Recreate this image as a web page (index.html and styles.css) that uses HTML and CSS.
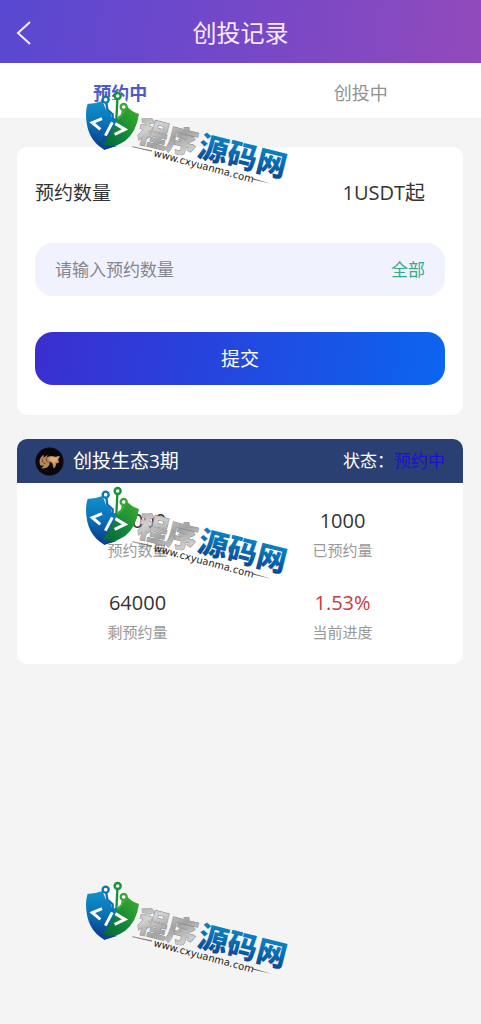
FILE: index.html
```html
<!DOCTYPE html>
<html lang="zh-CN">
<head>
<meta charset="utf-8">
<meta name="viewport" content="width=device-width, initial-scale=1">
<title>创投记录</title>
<link rel="stylesheet" href="styles.css">
</head>
<body>
<header class="topbar">
  <button class="back" type="button" aria-label="返回">
    <svg width="16" height="26" viewBox="0 0 16 26"><path d="M14 2 2 13l12 11" fill="none" stroke="currentColor" stroke-width="2"/></svg>
  </button>
  <h1 class="title">创投记录</h1>
</header>
<nav class="tabs">
  <a class="tab tab-active" href="#booking">预约中</a>
  <a class="tab" href="#investing">创投中</a>
</nav>
<main class="content">
  <form class="card form">
    <div class="form-row">
      <label for="amount">预约数量</label>
      <span class="minimum">1USDT起</span>
    </div>
    <div class="field">
      <input class="field-input" id="amount" type="text" placeholder="请输入预约数量">
      <button class="field-all" type="button">全部</button>
    </div>
    <button class="submit" type="button">提交</button>
  </form>
  <section class="card project">
    <div class="project-head">
      <svg class="avatar" viewBox="0 0 30 30">
        <circle cx="15" cy="15" r="14.500" fill="#08070c"/>
        <path d="M5 17C4 13 6 10 9 8l0 3 4-3-1 3c3-2 6-2 9-1l5-1-2 4 1 3-3 1-1 4-2 1-1-5-3-2c1 4-2 8-9 7 2-1 3-2 3-3-2 1-4 0-4-2z" fill="#b88758"/>
        <path d="M14 12c2-2 5-2 7-1l4-1-2 3 0 2-3 1 0 4-2-5-3-1z" fill="#e0ad79"/>
        <path d="M8 12c-1 3 0 5 3 5m1-6c-1 2 0 4 2 5" fill="none" stroke="#67432b"/>
      </svg>
      <h2 class="project-name">创投生态3期</h2>
      <span class="status">状态：<span class="status-value">预约中</span></span>
    </div>
    <dl class="stats">
      <div class="stat"><dd>65000</dd><dt>预约数量</dt></div>
      <div class="stat"><dd>1000</dd><dt>已预约量</dt></div>
      <div class="stat"><dd>64000</dd><dt>剩预约量</dt></div>
      <div class="stat"><dd class="progress">1.53%</dd><dt>当前进度</dt></div>
    </dl>
  </section>
</main>
<div class="marks" aria-hidden="true">
  <svg class="mark" viewBox="0 0 220 110">
    <defs>
      <linearGradient id="blue" x1="0" y1="0" x2="0" y2="1"><stop offset="0" stop-color="#1090cc"/><stop offset=".45" stop-color="#0a73b8"/><stop offset="1" stop-color="#0b3a86"/></linearGradient>
      <linearGradient id="green" x1="1" y1="0" x2="0" y2="1"><stop offset="0" stop-color="#43b02c"/><stop offset=".55" stop-color="#12853a"/><stop offset="1" stop-color="#03603b"/></linearGradient>
      <linearGradient id="silver" x1="0" y1="0" x2="1" y2="1"><stop offset="0" stop-color="#989898"/><stop offset=".3" stop-color="#d2d2d2"/><stop offset=".55" stop-color="#a2a2a2"/><stop offset=".8" stop-color="#cecece"/><stop offset="1" stop-color="#8d8d8d"/></linearGradient>
      <g id="logo">
        <svg width="220" height="110" viewBox="0 0 660 330">
          <path d="M23 56Q46 57 64 49L112 62 112 110 73 194Q18 164 18 88Q18 70 23 56Z" fill="url(#blue)"/>
          <path d="M110 62L140 63Q152 79 177 87Q170 140 135 168Q110 184 73 194L66 178Q92 150 110 108Z" fill="url(#green)"/>
          <path d="M66 178Q42 163 28 130Q40 167 73 194L113 182Q88 186 66 178Z" fill="#123f9a"/>
          <path d="M66 44L138 44 140 64 130 84 116 94 112 100 96 100 92 86 78 74Z" fill="#fff"/>
          <g fill="none" stroke-width="7"><path d="M79 54l3 20 16 14v20" stroke="#0874b8"/><path d="M112 44l-3 60" stroke="#16923a"/><path d="M129 76l-3 14-12 13" stroke="#39a935"/></g>
          <g fill="#fff" stroke-width="7"><circle cx="77" cy="44" r="9" stroke="#0874b8"/><circle cx="113" cy="33" r="9" stroke="#16923a"/><circle cx="131" cy="66" r="9" stroke="#39a935"/></g>
          <g fill="none" stroke="#fff" stroke-width="9"><path d="M66 101L37 113l24 20M97 112l-21 40M106 116l29 17-31 15"/></g>
          <path d="M157 185l58 12v2z" fill="#444" stroke="#444"/>
          <path d="M517 280l57 16-57-13z" fill="#444"/>
        </svg>
        <g transform="translate(56 56) rotate(14)">
          <text class="mark-name mark-silver" x="0" y="0" fill="url(#silver)">程序</text>
          <text class="mark-name" x="62" y="0" fill="url(#blue)">源码网</text>
        </g>
        <text class="mark-url" transform="translate(73 71) rotate(15)">www.cxyuanma.com</text>
      </g>
    </defs>
    <use href="#logo"/>
  </svg>
  <svg class="mark" viewBox="0 0 220 110"><use href="#logo"/></svg>
  <svg class="mark" viewBox="0 0 220 110"><use href="#logo"/></svg>
</div>
</body>
</html>
```

FILE: styles.css
```css
* { box-sizing: border-box; }

body {
  margin: 0;
  position: relative;
  min-height: 100vh;
  background: #f4f4f4;
  color: #333;
  font-family: "Open Sans", "Noto Sans CJK SC", sans-serif;
  font-size: 19px;
  line-height: 28px;
}

button, input { font: inherit; border: 0; padding: 0; background: none; }
h1, h2, dl, dd { margin: 0; font-weight: 400; }
a { text-decoration: none; }

.topbar {
  display: grid;
  grid-template-columns: 48px 1fr 48px;
  align-items: center;
  height: 63px;
  padding-top: 3px;
  background: linear-gradient(100deg, #5848d2, #7548c8 50%, #924abb);
  color: #fbeaff;
}
.back { display: flex; padding-left: 16px; color: inherit; }
.title { font-size: 24px; line-height: 34px; text-align: center; }

.tabs {
  display: grid;
  grid-template-columns: 1fr 1fr;
  align-items: center;
  height: 55px;
  padding-top: 4px;
  background: #fff;
  font-size: 18px;
  text-align: center;
}
.tab { color: #929292; }
.tab-active { color: #4e5acb; font-weight: 700; }

.content {
  display: flex;
  flex-direction: column;
  gap: 24px;
  padding: 29px 18px 24px 17px;
}
.card { background: #fff; border-radius: 10px; overflow: hidden; }

.form { padding: 32px 18px 30px; }
.form-row { display: flex; justify-content: space-between; padding-right: 20px; }
.minimum { font-size: 20px; }
.field {
  display: flex;
  align-items: center;
  height: 53px;
  margin: 36px 0;
  padding: 0 20px;
  border-radius: 18px;
  background: #f0f2fd;
  font-size: 17px;
}
.field-input { flex: 1; min-width: 0; outline: 0; color: #333; }
.field-input::placeholder { color: #85858d; opacity: 1; }
.field-all { color: #36aa91; }
.submit {
  display: block;
  width: 100%;
  height: 53px;
  border-radius: 18px;
  background: linear-gradient(100deg, #3b2ed0, #2348e0 50%, #0b65f0);
  color: #fff;
}

.project-head {
  display: flex;
  align-items: center;
  height: 44px;
  padding: 0 18px;
  background: #2a4072;
  color: #fff;
}
.avatar { width: 29px; height: 29px; margin-right: 9px; }
.project-name { flex: 1; font-size: 19px; }
.status { font-size: 17px; }
.status-value { color: #1c12cf; }

.stats {
  display: grid;
  grid-template-columns: 1fr 1fr;
  row-gap: 24px;
  padding: 23px 18px 18px;
  text-align: center;
}
.stat { display: flex; flex-direction: column; }
.stat dd { font-size: 20px; line-height: 30px; }
.stat dt { font-size: 15px; color: #999; }
.stat .progress { color: #cb3a3a; }

.marks {
  position: absolute;
  top: 85px;
  left: 80px;
  display: flex;
  flex-direction: column;
  gap: 285px;
  pointer-events: none;
}
.mark { display: block; width: 220px; height: 110px; }
.mark-name {
  font-family: "Noto Sans CJK SC", sans-serif;
  font-size: 30px;
  font-weight: 900;
}
.mark-silver { stroke: #8e8e8e; stroke-width: 1px; paint-order: stroke; }
.mark-url { font-family: "DejaVu Sans", sans-serif; font-size: 10px; fill: #222; }
```
